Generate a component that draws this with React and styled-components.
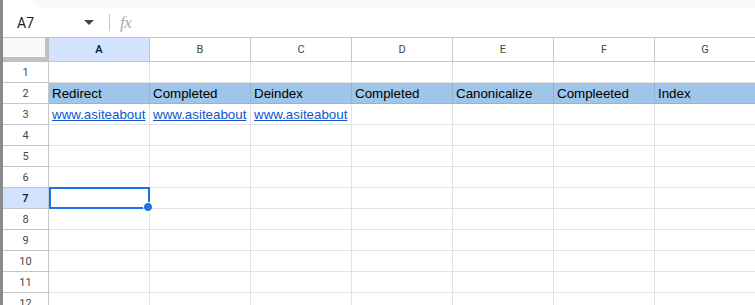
import React from "react";
import styled, { createGlobalStyle } from "styled-components";

const Global = createGlobalStyle`
  html, body { margin: 0; padding: 0; background: #fff; overflow: hidden; }
  body { font-family: "Liberation Sans", Arial, sans-serif; }
`;

const Page = styled.div`
  display: flex;
  width: 755px;
  height: 305px;
  overflow: hidden;
  background: #fff;
`;

const LeftEdge = styled.div`
  flex: 0 0 3px;
  background: #8a8a8a;
`;

const Main = styled.div`
  flex: 1;
  display: flex;
  flex-direction: column;
  min-width: 0;
  overflow: hidden;
`;

const TopStrip = styled.div`
  flex: 0 0 8px;
  margin-left: 30px;
  background: #f8fafd;
  border-bottom-left-radius: 8px;
`;

const FormulaBar = styled.div`
  flex: 0 0 29px;
  display: flex;
  align-items: center;
`;

const NameBox = styled.div`
  width: 100px;
  display: flex;
  align-items: center;
  justify-content: space-between;
  padding: 0 9px 0 14px;
  box-sizing: border-box;
  font-family: Roboto, "Liberation Sans", sans-serif;
  font-size: 14px;
  color: #1f1f1f;
`;

const Caret = styled.span`
  width: 0;
  height: 0;
  border-left: 5px solid transparent;
  border-right: 5px solid transparent;
  border-top: 5px solid #444746;
`;

const Separator = styled.div`
  width: 1px;
  height: 17px;
  background: #c7c7c7;
  margin: 0 10px 0 6px;
`;

const Fx = styled.span`
  font-family: "Liberation Serif", serif;
  font-style: italic;
  font-size: 17px;
  color: #a8abae;
  letter-spacing: -0.5px;
`;

const Grid = styled.div`
  flex: 0 0 auto;
  border-top: 1px solid #c4c7c5;
`;

const Row = styled.div`
  display: flex;
`;

const Corner = styled.div`
  flex: 0 0 46px;
  height: 24px;
  box-sizing: border-box;
  background: #f8f9fa;
  border-right: 4px solid #c0c0c0;
  border-bottom: 5px solid #c0c0c0;
`;

const ColHeader = styled.div`
  flex: 0 0 101px;
  height: 24px;
  box-sizing: border-box;
  border-right: 1px solid #c4c7c5;
  border-bottom: 1px solid #c4c7c5;
  display: flex;
  align-items: center;
  justify-content: center;
  font-family: Roboto, "Liberation Sans", sans-serif;
  font-size: 11px;
  background: ${(p) => (p.$active ? "#d3e3fd" : "#fff")};
  color: ${(p) => (p.$active ? "#0b1f3f" : "#444746")};
  font-weight: ${(p) => (p.$active ? 600 : 400)};
`;

const RowHeader = styled.div`
  flex: 0 0 46px;
  height: 21px;
  box-sizing: border-box;
  border-right: 1px solid #c4c7c5;
  border-bottom: 1px solid #c4c7c5;
  display: flex;
  align-items: center;
  justify-content: center;
  font-family: Roboto, "Liberation Sans", sans-serif;
  font-size: 11px;
  background: ${(p) => (p.$active ? "#d3e3fd" : "#fff")};
  color: ${(p) => (p.$active ? "#0b1f3f" : "#444746")};
  font-weight: ${(p) => (p.$active ? 600 : 400)};
`;

const Cell = styled.div`
  position: relative;
  flex: 0 0 101px;
  height: 21px;
  box-sizing: border-box;
  padding: 0 3px;
  border-right: 1px solid ${(p) => (p.$head ? "#8fb5da" : "#e1e1e1")};
  border-bottom: 1px solid ${(p) => (p.$head ? "#8fb5da" : "#e1e1e1")};
  background: ${(p) => (p.$head ? "#9fc5e8" : "#fff")};
  font-family: "Liberation Sans", Arial, sans-serif;
  font-size: 13.333px;
  line-height: 21px;
  color: #000;
  white-space: nowrap;
  overflow: ${(p) => (p.$selected ? "visible" : "hidden")};
`;

const Link = styled.span`
  color: #1155cc;
  text-decoration: underline;
`;

const Selection = styled.div`
  position: absolute;
  left: 0;
  top: -1px;
  width: 101px;
  height: 22px;
  box-sizing: border-box;
  border: 2px solid #1a73e8;
  pointer-events: none;
  z-index: 2;
`;

const Handle = styled.div`
  position: absolute;
  right: -5px;
  bottom: -5px;
  width: 8px;
  height: 8px;
  border-radius: 50%;
  background: #1a73e8;
  border: 1px solid #fff;
`;

const cols = ["A", "B", "C", "D", "E", "F", "G"];
const headers = ["Redirect", "Completed", "Deindex", "Completed", "Canonicalize", "Compleeted", "Index"];

export default function App() {
  const rows = Array.from({ length: 12 }, (_, i) => i + 1);
  return (
    <Page>
      <Global />
      <LeftEdge />
      <Main>
        <TopStrip />
        <FormulaBar>
          <NameBox>
            <span>A7</span>
            <Caret />
          </NameBox>
          <Separator />
          <Fx>fx</Fx>
        </FormulaBar>
        <Grid>
          <Row>
            <Corner />
            {cols.map((c) => (
              <ColHeader key={c} $active={c === "A"}>
                {c}
              </ColHeader>
            ))}
          </Row>
          {rows.map((r) => (
            <Row key={r}>
              <RowHeader $active={r === 7}>{r}</RowHeader>
              {cols.map((c, ci) => {
                if (r === 2) {
                  return (
                    <Cell key={c} $head>
                      {headers[ci]}
                    </Cell>
                  );
                }
                if (r === 3 && ci < 3) {
                  return (
                    <Cell key={c}>
                      <Link>www.asiteabout</Link>
                    </Cell>
                  );
                }
                if (r === 7 && ci === 0) {
                  return (
                    <Cell key={c} $selected>
                      <Selection>
                        <Handle />
                      </Selection>
                    </Cell>
                  );
                }
                return <Cell key={c} />;
              })}
            </Row>
          ))}
        </Grid>
      </Main>
    </Page>
  );
}
